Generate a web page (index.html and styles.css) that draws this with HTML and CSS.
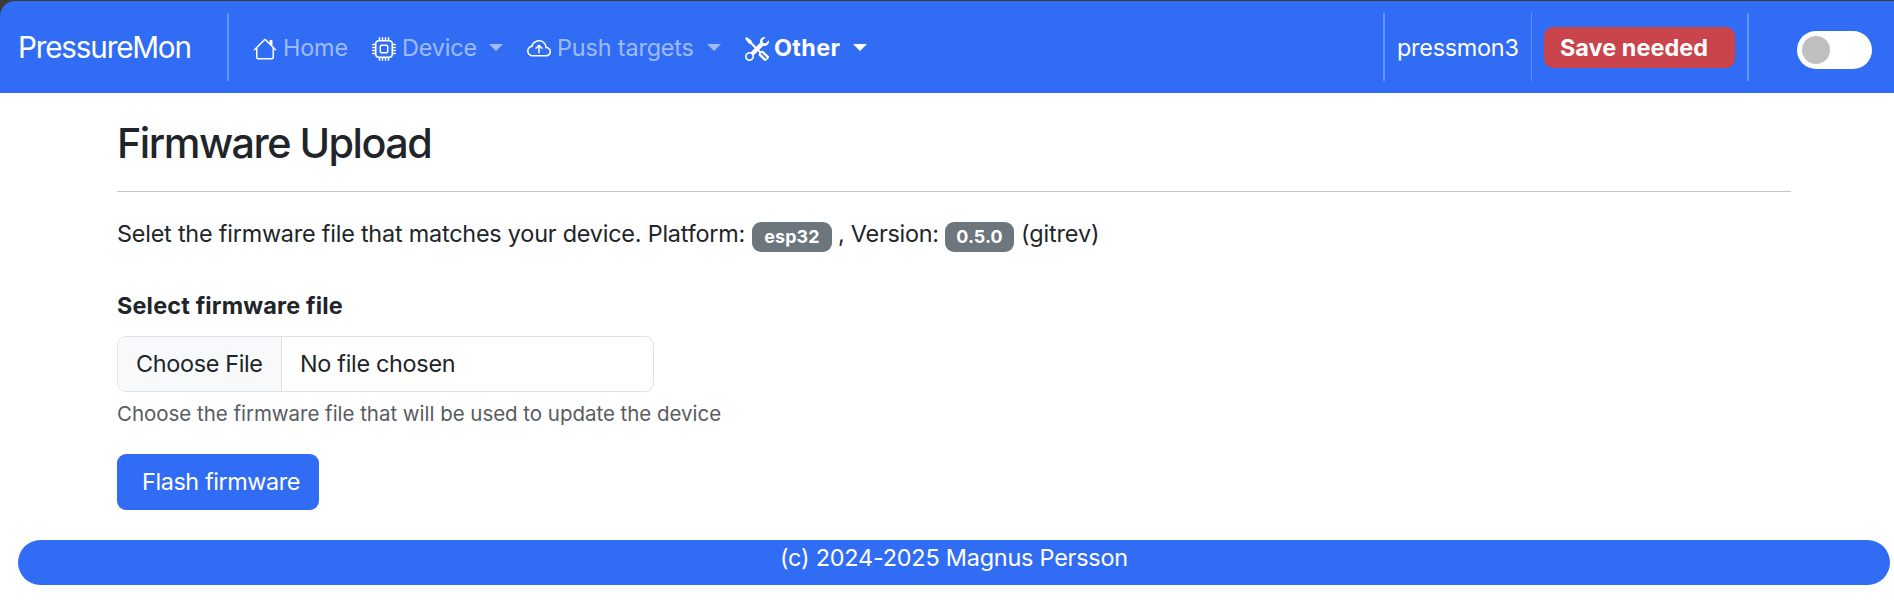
FILE: index.html
```html
<!DOCTYPE html>
<html lang="en">
<head>
<meta charset="utf-8">
<title>PressureMon</title>
<link rel="stylesheet" href="styles.css">
</head>
<body>
<div class="window-edge">
<header class="navbar">
  <a class="brand">PressureMon</a>
  <span class="vr"></span>
  <nav class="menu">
    <a class="item item-home"><svg class="icon" viewBox="0 0 16 16"><path d="M8.707 1.5a1 1 0 0 0-1.414 0L.646 8.146a.5.5 0 0 0 .708.708L2 8.207V13.5A1.5 1.5 0 0 0 3.5 15h9a1.5 1.5 0 0 0 1.5-1.5V8.207l.646.647a.5.5 0 0 0 .708-.708L13 5.793V2.5a.5.5 0 0 0-.5-.5h-1a.5.5 0 0 0-.5.5v1.293zM13 7.207V13.5a.5.5 0 0 1-.5.5h-9a.5.5 0 0 1-.5-.5V7.207l5-5z"/></svg><span class="label">Home</span></a>
    <a class="item item-device"><svg class="icon" viewBox="0 0 16 16"><path d="M5 0a.5.5 0 0 1 .5.5V2h1V.5a.5.5 0 0 1 1 0V2h1V.5a.5.5 0 0 1 1 0V2h1V.5a.5.5 0 0 1 1 0V2A2.5 2.5 0 0 1 14 4.5h1.5a.5.5 0 0 1 0 1H14v1h1.5a.5.5 0 0 1 0 1H14v1h1.5a.5.5 0 0 1 0 1H14v1h1.5a.5.5 0 0 1 0 1H14a2.5 2.5 0 0 1-2.5 2.5v1.5a.5.5 0 0 1-1 0V14h-1v1.5a.5.5 0 0 1-1 0V14h-1v1.5a.5.5 0 0 1-1 0V14h-1v1.5a.5.5 0 0 1-1 0V14A2.5 2.5 0 0 1 2 11.5H.5a.5.5 0 0 1 0-1H2v-1H.5a.5.5 0 0 1 0-1H2v-1H.5a.5.5 0 0 1 0-1H2v-1H.5a.5.5 0 0 1 0-1H2A2.5 2.5 0 0 1 4.5 2V.5A.5.5 0 0 1 5 0m-.5 3A1.5 1.5 0 0 0 3 4.5v7A1.5 1.5 0 0 0 4.5 13h7a1.5 1.5 0 0 0 1.5-1.5v-7A1.5 1.5 0 0 0 11.5 3zM5 6.5A1.5 1.5 0 0 1 6.5 5h3A1.5 1.5 0 0 1 11 6.5v3A1.5 1.5 0 0 1 9.5 11h-3A1.5 1.5 0 0 1 5 9.5zM6.5 6a.5.5 0 0 0-.5.5v3a.5.5 0 0 0 .5.5h3a.5.5 0 0 0 .5-.5v-3a.5.5 0 0 0-.5-.5z"/></svg><span class="label">Device</span><span class="caret"></span></a>
    <a class="item item-push"><svg class="icon" viewBox="0 0 16 16"><path d="M7.646 5.146a.5.5 0 0 1 .708 0l2 2a.5.5 0 0 1-.708.708L8.5 6.707V10.5a.5.5 0 0 1-1 0V6.707L6.354 7.854a.5.5 0 1 1-.708-.708z"/><path d="M4.406 3.342A5.53 5.53 0 0 1 8 2c2.69 0 4.923 2 5.166 4.579C14.758 6.804 16 8.137 16 9.773 16 11.569 14.502 13 12.687 13H3.781C1.708 13 0 11.366 0 9.318c0-1.763 1.266-3.223 2.942-3.593.143-.863.698-1.723 1.464-2.383m.653.757c-.757.653-1.153 1.44-1.153 2.056v.448l-.445.049C2.064 6.805 1 7.952 1 9.318 1 10.785 2.23 12 3.781 12h8.906C13.98 12 15 10.988 15 9.773c0-1.216-1.02-2.228-2.313-2.228h-.5v-.5C12.188 4.825 10.328 3 8 3a4.53 4.53 0 0 0-2.941 1.1z"/></svg><span class="label">Push targets</span><span class="caret"></span></a>
    <a class="item item-other active"><svg class="icon" viewBox="0 0 16 16"><path d="M1 0 0 1l2.2 3.081a1 1 0 0 0 .815.419h.07a1 1 0 0 1 .708.293l2.675 2.675-2.617 2.654A3.003 3.003 0 0 0 0 13a3 3 0 1 0 5.878-.851l2.654-2.617.968.968-.305.914a1 1 0 0 0 .242 1.023l3.27 3.27a.997.997 0 0 0 1.414 0l1.586-1.586a.997.997 0 0 0 0-1.414l-3.27-3.27a1 1 0 0 0-1.023-.242L10.5 9.5l-.96-.96 2.68-2.643A3.005 3.005 0 0 0 16 3q0-.405-.102-.777l-2.14 2.141L12 4l-.364-1.757L13.777.102a3 3 0 0 0-3.675 3.68L7.462 6.46 4.793 3.793a1 1 0 0 1-.293-.707v-.071a1 1 0 0 0-.419-.814zm9.646 10.646a.5.5 0 0 1 .708 0l2.914 2.915a.5.5 0 0 1-.707.707l-2.915-2.914a.5.5 0 0 1 0-.708M3 11l.471.242.529.026.287.445.445.287.026.529L5 13l-.242.471-.026.529-.445.287-.287.445-.529.026L3 15l-.471-.242L2 14.732l-.287-.445L1.268 14l-.026-.529L1 13l.242-.471.026-.529.445-.287.287-.445.529-.026z"/></svg><span class="label">Other</span><span class="caret"></span></a>
  </nav>
  <div class="status">
    <span class="vr"></span>
    <span class="host">pressmon3</span>
    <span class="vr vr-thin"></span>
    <span class="save">Save needed</span>
    <span class="vr"></span>
    <span class="toggle"><span class="knob"></span></span>
  </div>
</header>
</div>
<main class="container">
  <h3 class="title">Firmware Upload</h3>
  <hr class="rule">
  <p class="intro"><span class="intro-lead">Selet the firmware file that matches your device. Platform:</span><span class="badge badge-platform">esp32</span><span class="intro-version">, Version:</span><span class="badge badge-version">0.5.0</span><span class="gitrev">(gitrev)</span></p>
  <div class="field-label">Select firmware file</div>
  <div class="file"><span class="file-button">Choose File</span><span class="file-name">No file chosen</span></div>
  <div class="help">Choose the firmware file that will be used to update the device</div>
  <button class="flash">Flash firmware</button>
</main>
<footer class="footer">(c) 2024-2025 Magnus Persson</footer>
</body>
</html>
```
FILE: styles.css
```css
* { box-sizing: border-box; }
body {
  margin: 0;
  background: #fff;
  color: #212529;
  font: 400 23.4px/36px Inter, "Liberation Sans", sans-serif;
  letter-spacing: -0.25px;
  white-space: nowrap;
}
.window-edge {
  padding-top: 1px;
  background: linear-gradient(#3a3a3a 20px, #fff 20px);
}
.navbar {
  display: flex;
  align-items: center;
  height: 92px;
  padding-left: 18px;
  border-top-left-radius: 15px;
  background: #316cf4;
  color: #fff;
}
.brand { width: 209px; font-size: 29.7px; letter-spacing: -1.2px; }
.vr { flex: none; width: 2px; height: 68px; background: rgba(255, 255, 255, 0.25); }
.vr-thin { width: 1px; }
.menu { display: flex; margin-left: 24px; }
.item { display: flex; align-items: center; color: rgba(255, 255, 255, 0.55); }
.item-home { width: 119px; }
.item-device { width: 155px; }
.item-push { width: 218px; }
.item-other { width: 123px; }
.item.active { color: #fff; font-weight: 700; }
.icon { flex: none; width: 24px; height: 24px; margin: 4px 5px 0 0; fill: #fff; }
.label { flex: none; padding: 1px 0 0 1px; letter-spacing: -0.15px; }
.item-device .label { width: 88px; }
.item-push .label { width: 151px; }
.item-other .label { width: 79px; padding-left: 0; letter-spacing: 0.35px; }
.caret {
  border: 7px solid transparent;
  border-top-color: currentColor;
  border-bottom: 0;
}
.status { display: flex; align-items: center; margin-left: auto; }
.host { width: 146px; padding: 1px 0 0 12px; }
.save {
  width: 191px;
  height: 41px;
  margin: 0 12px;
  padding-left: 16px;
  border-radius: 9px;
  background: #ca444b;
  font-weight: 700;
  letter-spacing: 0.05px;
  line-height: 42px;
}
.toggle {
  width: 75px;
  height: 38px;
  margin: 6px 22px 0 48px;
  padding: 5px;
  border-radius: 19px;
  background: #fff;
}
.knob { display: block; width: 28px; height: 28px; border-radius: 50%; background: #bfbfbf; }
.container { padding: 25px 103px 0 117px; }
.title { margin: 0; font-size: 41.3px; font-weight: 500; line-height: 50px; letter-spacing: -1.5px; }
.rule { height: 1px; margin: 23px 0 24px; border: 0; background: #c5c6c7; }
.intro { display: flex; align-items: center; margin: 0; height: 36px; }
.intro-lead { width: 635px; letter-spacing: -0.21px; }
.intro-version { width: 107px; margin-left: 6px; }
.badge {
  height: 30px;
  margin-top: 5px;
  border-radius: 9px;
  background: #6d757d;
  color: #fff;
  font-size: 17.9px;
  font-weight: 700;
  letter-spacing: 0.1px;
  line-height: 30px;
  text-align: center;
}
.badge-platform { width: 80px; }
.badge-version { width: 69px; }
.gitrev { margin-left: 7px; letter-spacing: -0.1px; }
.field-label { margin-top: 36px; font-weight: 700; letter-spacing: 0.18px; }
.file {
  display: flex;
  width: 537px;
  height: 56px;
  margin-top: 12px;
  border: 1px solid #dee2e6;
  border-radius: 9px;
  line-height: 54px;
  overflow: hidden;
}
.file-button { width: 164px; padding-left: 18px; border-right: 1px solid #dee2e6; background: #f8f9fa; letter-spacing: -0.33px; }
.file-name { padding-left: 18px; letter-spacing: -0.3px; }
.help { margin-top: 4px; color: #595c5f; font-size: 20.5px; letter-spacing: -0.03px; }
.flash {
  display: block;
  width: 202px;
  height: 56px;
  margin: 22px 0 0;
  padding: 0 0 0 25px;
  border: 0;
  border-radius: 9px;
  background: #316cf4;
  color: #fff;
  font: inherit;
  letter-spacing: -0.4px;
  text-align: left;
}
.footer {
  height: 45px;
  margin: 30px 4px 0 18px;
  border-radius: 23px;
  background: #316cf4;
  color: #fff;
  letter-spacing: -0.2px;
  text-align: center;
}
```
